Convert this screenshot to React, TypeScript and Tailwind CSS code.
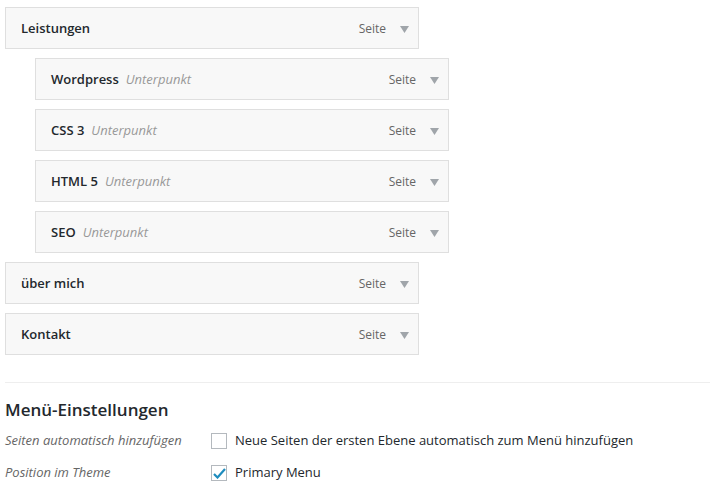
import React from "react";

const items = [
  { t: "Leistungen", sub: false },
  { t: "Wordpress", sub: true },
  { t: "CSS 3", sub: true },
  { t: "HTML 5", sub: true },
  { t: "SEO", sub: true },
  { t: "über mich", sub: false },
  { t: "Kontakt", sub: false },
];

export default function App() {
  return (
    <div className="w-[710px] h-[487px] bg-white overflow-hidden text-[#23282d]" style={{ fontFamily: '"Open Sans", sans-serif' }}>
      <div className="pt-[7px] flex flex-col gap-[9px]">
        {items.map((it) => (
          <div key={it.t} className={`${it.sub ? "ml-[35px]" : "ml-[5px]"} w-[414px] h-[42px] border border-[#dfdfdf] bg-[#f8f8f8] flex items-center pt-[2px] pl-[15px] pr-[8px]`}>
            <span className="text-[13px] font-semibold">{it.t}</span>
            {it.sub && <span className="ml-[7px] text-[13px] italic text-[#999]">Unterpunkt</span>}
            <span className="ml-auto text-[12px] text-[#666]">Seite</span>
            <svg width="9" height="8" viewBox="0 0 9 8" className="ml-[14px] mr-[1px]"><path d="M0 1h9L4.5 8z" fill="#a0a5aa" /></svg>
          </div>
        ))}
      </div>
      <div className="ml-[5px] mt-[27px] border-t border-[#eeeeee]" />
      <div className="ml-[5px] mt-[16px] text-[17px] leading-[22px] font-semibold">Menü-Einstellungen</div>
      <div className="ml-[5px] mt-[10px] flex items-center h-[20px]">
        <span className="w-[206px] text-[13px] italic text-[#666]">Seiten automatisch hinzufügen</span>
        <span className="w-[16px] h-[16px] border border-[#b4b9be] bg-white" />
        <span className="ml-[8px] text-[13px]">Neue Seiten der ersten Ebene automatisch zum Menü hinzufügen</span>
      </div>
      <div className="ml-[5px] mt-[12px] flex items-center h-[20px]">
        <span className="w-[206px] text-[13px] italic text-[#666]">Position im Theme</span>
        <span className="w-[16px] h-[16px] border border-[#b4b9be] bg-white flex items-center justify-center">
          <svg width="13" height="11" viewBox="0 0 13 11"><path d="M1 6l3.5 3.5L12 1" stroke="#1e8cbe" strokeWidth="2.2" fill="none" /></svg>
        </span>
        <span className="ml-[8px] text-[13px]">Primary Menu</span>
      </div>
    </div>
  );
}
